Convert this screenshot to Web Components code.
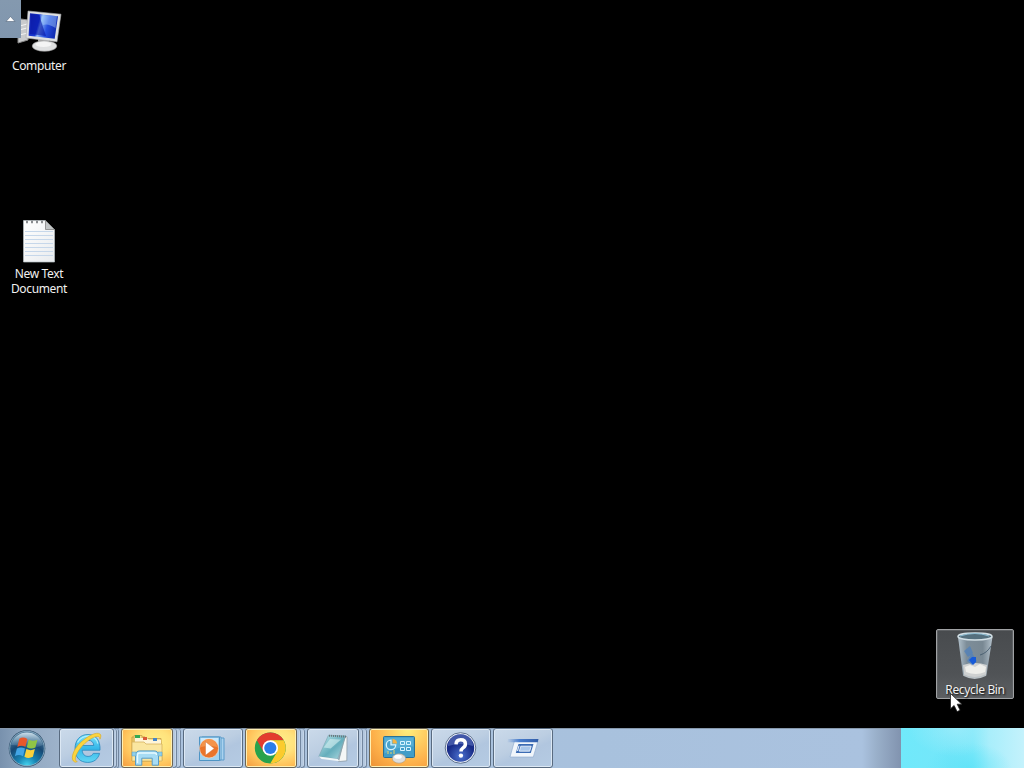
<!DOCTYPE html>
<html lang="en">
<head>
<meta charset="utf-8">
<title>Desktop</title>
<style>
html, body { margin: 0; height: 100%; background: #000; overflow: hidden; }
</style>
</head>
<body>
<win-desktop></win-desktop>
<script>
function define(name, html) {
  const t = document.createElement('template');
  t.innerHTML = html;
  customElements.define(name, class extends HTMLElement {
    constructor() {
      super();
      this.attachShadow({ mode: 'open' }).append(t.content.cloneNode(true));
    }
  });
}

define('desk-icon', `
<style>
:host { position: absolute; box-sizing: border-box; width: 78px; display: flex; flex-direction: column; align-items: center; border: 1px solid transparent; border-radius: 2px; color: #f0f0f0; font: 12px/15px "Noto Sans", "Open Sans", sans-serif; text-align: center; text-shadow: 1px 1px 2px #000; }
:host([selected]) { border-color: #a0a2a4; background: linear-gradient(#484b4e, #505356 65%, #5c5f62); box-shadow: inset 0 0 0 1px #5e6164; }
::slotted(svg) { display: block; flex: none; }
.label { letter-spacing: -.35px; }
</style>
<slot name="picture"></slot><div class="label"><slot></slot></div>`);

define('task-button', `
<style>
:host { display: block; box-sizing: border-box; flex: none; height: 40px; width: var(--w, 60px); border: 1px solid #596b80; border-radius: 3px; box-shadow: inset 0 0 0 1px #dce8f4; background: linear-gradient(155deg, #cbdaea 0%, #bccee2 45%, #b1c6df 60%, #b5cbe3 100%); }
:host([hot]) { border-color: #6b6455; box-shadow: inset 0 0 0 1px #fff0b3; background: radial-gradient(ellipse at 65% 35%, #fff08b 0%, #ffe27c 35%, #ffc45c 65%, #f39a3e 100%); }
:host([panel]) { background: radial-gradient(ellipse at 65% 0%, #fff07d 0%, #ffd165 30%, #fdb04a 65%, #ec9034 100%); }
::slotted(svg) { display: block; margin: -1px; }
</style><slot></slot>`);

define('stack-edge', `
<style>
:host { display: flex; flex: none; width: 8px; height: 40px; box-sizing: border-box; border-top: 1px solid #60738a; margin-right: 2px; }
i { display: block; box-sizing: border-box; width: 4px; height: 39px; border: 1px solid #72869f; border-left: 0; border-top: 0; border-radius: 0 3px 3px 0; background: linear-gradient(90deg, #b4c8df 60%, #cfdded); }
</style><i></i><i></i>`);

define('start-orb', `
<style>:host { display: block; flex: none; width: 59px; height: 40px; } svg { display: block; }</style>
<svg width="59" height="40" viewBox="0 728 59 40">
<defs>
<radialGradient id="o" cx=".5" cy="1" r=".95"><stop offset="0" stop-color="#48d8f2"/><stop offset=".3" stop-color="#1783b3"/><stop offset=".65" stop-color="#174873"/><stop offset="1" stop-color="#547c9c"/></radialGradient>
<linearGradient id="h" x2="0" y2="1"><stop offset="0" stop-color="#e1f0f7" stop-opacity=".85"/><stop offset="1" stop-color="#80adc8" stop-opacity=".15"/></linearGradient>
</defs>
<circle cx="27" cy="748.5" r="18.3" fill="#31506c"/><circle cx="27" cy="748.5" r="17.3" fill="url(#o)" stroke="#92b6cb" stroke-width=".8"/>
<path d="M11 745a16.5 16.5 0 0 1 32 0q-8 4-16 2-9-2-16-2z" fill="url(#h)"/>
<path d="M19.3 738.7q3.7-2.3 8.1.2l-2 7.9q-4-2-8.1.1z" fill="#e8582b"/>
<path d="M28.8 739.5q4.2 2.4 8.6.2l-2 7.7q-4.2 2.2-8.6-.1z" fill="#8fc545"/>
<path d="M16.9 748.4q4.2-2 8.1.1l-2 7.7q-4.2-2.3-8.1 0z" fill="#43a5e5"/>
<path d="M26.4 749.1q4.2 2.1 8.5 0l-2 7.7q-4.3 2.3-8.5-.1z" fill="#fbd13b"/>
</svg>`);

define('task-bar', `
<style>
:host { display: flex; width: 1024px; height: 40px; flex: none; background: linear-gradient(90deg, #7891ad 0, #91a8c1 25px, #9db2ca 58px, #abc2dd 62px, #a8c1dd 600px, #aac2df 862px, #99afc9 877px, #8193af 901px); box-shadow: inset 0 1px #8799ad; }
.gap1 { margin-right: 2px; }
.tray { margin-left: auto; width: 123px; height: 40px; background: radial-gradient(ellipse at 45% 0, #b1effb88, transparent 50%), radial-gradient(ellipse at 55% 100%, #52e1f799, transparent 45%), linear-gradient(90deg, #70e9fb 0, #75e6f9 50px, #7de8fa 72px, #a8eefb 88px, #c4f2fc 123px); }
</style>
<start-orb></start-orb>
<task-button style="--w:55px">
<svg width="55" height="40" viewBox="59 728 55 40">
<defs><linearGradient id="e" x2="0" y2="1"><stop stop-color="#7be3fa"/><stop offset=".5" stop-color="#35b7e9"/><stop offset="1" stop-color="#64d6f4"/></linearGradient></defs>
<path fill-rule="evenodd" d="M88 734.5c8 0 12.5 6 12 15.7H82.2c.3 4 2.4 6.2 5.9 6.2 2.6 0 4.2-1 5.1-3h6.4c-1.6 5.7-5.7 9-11.8 9-8 0-12.8-5.2-12.8-13.5 0-8.7 5-14.4 13-14.4zM82.3 745.5h11.5c-.3-3.4-2.3-5.2-5.6-5.2-3.2 0-5.2 1.8-5.9 5.2z" fill="url(#e)" stroke="#2787bd" stroke-width=".8"/>
<path d="M77.5 742.5c2.8-4.6 6.3-6.3 10.7-6.3 5 0 8.5 2.8 9.6 7.3" fill="none" stroke="#c2f5ff" stroke-width="1.3" opacity=".8"/>
<path d="M75.5 762.2c-6.1-1.2-2.8-12.4 4.6-19.2 7.1-6.8 16.4-11.8 20-8.9 1.2 1 .9 2.8-.2 5.1.2-2.8-2-3.6-6-1.9-5.8 2.4-13 9-16.5 15.4-2.3 4.2-3.1 8-.1 8.9z" fill="#fbd43e" stroke="#d7a623" stroke-width=".6"/>
</svg></task-button>
<stack-edge style="width:5px"></stack-edge>
<task-button hot style="--w:52px">
<svg width="52" height="40" viewBox="121 728 52 40">
<path d="M132 737h13l2 3h13v21h-28z" fill="#f4d472" stroke="#c99d40"/>
<path d="M134 735.5h8v3h19l1 22h-28z" fill="#f8df92" stroke="#d0aa53"/>
<path d="M135 738h12l2 2h12v4h-26z" fill="#fff5d7"/><path d="M135 735h5v3h-5z" fill="#36a853"/><path d="M143 737h4v3h-4z" fill="#d95938"/><path d="M153 738h4v3h-4z" fill="#4685c7"/>
<path d="M132 742h12l2 2h16v17h-30z" fill="#fae6a0" stroke="#d5b361" stroke-width=".8"/>
<path d="M135.5 765.2v-10q0-4.3 4.5-4.3h14q4.5 0 4.5 4.3v10h-6.3v-7h-10.4v7z" fill="#a7dcf4" stroke="#579cc6"/>
<path d="M137.5 763v-8q0-2 2-2h15q2 0 2 2" fill="none" stroke="#e7faff" stroke-width="1.4"/>
<path d="M132 752h4v4h-4zM158 752h4v4h-4z" fill="#8ed0eb" stroke="#589fc2" stroke-width=".5"/>
</svg></task-button>
<stack-edge></stack-edge>
<task-button class="gap1" style="--w:60px">
<svg width="60" height="40" viewBox="183 728 60 40">
<path d="M205 738h19v22h-19z" fill="#a9d2ef" stroke="#5b9bca"/><path d="M202 737h19v23h-19z" fill="#b9dcf3" stroke="#5b9bca"/><path d="M199.5 737h20v23.5h-20z" fill="#a3d3ef" stroke="#4f95c5"/>
<path d="M201 738h17v9q-9-1-17 6z" fill="#cae9fc"/><circle cx="209" cy="748.5" r="9.5" fill="#ea742a" stroke="#f6d6bd" stroke-width=".7"/><path d="M201 747a8 8 0 0 1 16 0q-8-2-16 0z" fill="#f3934a"/><path d="M205.5 741.8l8.8 6.7-8.8 6.7z" fill="#fff" stroke="#c5622b" stroke-width=".4"/>
</svg></task-button>
<task-button hot style="--w:52px">
<svg width="52" height="40" viewBox="245 728 52 40">
<circle cx="270.3" cy="748" r="15.5" fill="#2aa24c"/>
<path d="M256.9 740.25A15.5 15.5 0 0 1 283.7 740.25H270.3L263.6 751.9z" fill="#e33b2e"/>
<path d="M283.7 740.25A15.5 15.5 0 0 1 270.3 763.5L277 751.9 270.3 740.25z" fill="#fbcb2d"/>
<circle cx="270.3" cy="748" r="7.8" fill="#fff"/><circle cx="270.3" cy="748" r="6.1" fill="#2b7de9"/>
</svg></task-button>
<stack-edge></stack-edge>
<task-button style="--w:52px">
<svg width="52" height="40" viewBox="307 728 52 40">
<defs><linearGradient id="n" x2="1" y2="1"><stop stop-color="#bfe6ec"/><stop offset=".55" stop-color="#65aebc"/><stop offset="1" stop-color="#b4dce3"/></linearGradient></defs>
<path d="M345 736l2 .8-.2 24-8.2.8z" fill="#f4f6f6" stroke="#788890" stroke-width=".6"/><path d="M345 738l-7 23" stroke="#8da3a9" stroke-width=".8"/>
<path d="M328.4 735.3l17 .5-7.8 23.2-18.8-2.5z" fill="url(#n)" stroke="#7aa5b0" stroke-width=".6"/>
<path d="M318.8 756.5l18.8 2.5 2 2.2-18-2.2z" fill="#f2f7f8"/><path d="M329 735.7l17 1" stroke="#6c767c" stroke-width="2" stroke-dasharray="1 1"/><path d="M330 739l11 .4-10.4 9-7-1z" fill="#def6f6" opacity=".55"/>
</svg></task-button>
<stack-edge></stack-edge>
<task-button class="gap1" hot panel style="--w:60px">
<svg width="60" height="40" viewBox="369 728 60 40">
<rect x="383.5" y="736.5" width="31" height="21" rx="1" fill="#409dc8" stroke="#2c7195"/><path d="M384.5 737.5h29v9q-14-1-29 7z" fill="#65b9dc" opacity=".6"/>
<path d="M391 740.2a4.7 4.7 0 1 0 4.7 4.7H391z" fill="#4aa2cb" stroke="#d5f3ff" stroke-width="1.3"/><path d="M392.5 743.5v-4.7a4.7 4.7 0 0 1 4.6 4.7z" fill="#f6b343"/>
<path d="M400.5 741.5h4v3h-4zM406.5 741.5h4v3h-4zM400.5 747.5h4v3h-4zM406.5 747.5h4v3h-4z" fill="none" stroke="#d5f4ff"/>
<path d="M388 754v-3M391 754v-2M394 754v-4" stroke="#ebd264"/><ellipse cx="399" cy="758.5" rx="6.7" ry="4.7" fill="#dddedd" stroke="#a89983" stroke-width=".6"/><ellipse cx="398" cy="756.8" rx="3.8" ry="2" fill="#fff"/>
</svg></task-button>
<task-button class="gap1" style="--w:60px">
<svg width="60" height="40" viewBox="431 728 60 40">
<defs><radialGradient id="q" cy=".8"><stop stop-color="#4b71ce"/><stop offset="1" stop-color="#182b87"/></radialGradient></defs>
<circle cx="460.5" cy="748" r="15.3" fill="#eef3f9" stroke="#5e718f"/><circle cx="460.5" cy="748" r="13.7" fill="url(#q)"/><path d="M448 746a12.5 12 0 0 1 25 0q-12-4-25 0z" fill="#839bda" opacity=".4"/>
<path d="M456 744.3q.2-4.6 4.7-4.6 4.7 0 4.7 4.2 0 2.4-2.4 4-2 1.4-2 3.5" fill="none" stroke="#fff" stroke-width="3.5"/><circle cx="460.9" cy="755.6" r="2.2" fill="#fff"/>
</svg></task-button>
<task-button style="--w:60px">
<svg width="60" height="40" viewBox="493 728 60 40">
<defs><linearGradient id="r" x2="1"><stop stop-color="#477ccc" stop-opacity="0"/><stop offset=".4" stop-color="#477ccc"/><stop offset="1" stop-color="#315da8"/></linearGradient></defs>
<path d="M514.5 741h23.5l-4.7 16h-23.3z" fill="#f1f6fb" stroke="#8ca8cc" stroke-width=".6"/><path d="M508 739h30.5l-.8 3.2H507z" fill="url(#r)"/><path d="M518.5 744h15l-2.7 9h-15z" fill="#3c6cb4"/><path d="M520.8 746.2h10.4l-1.5 5h-10.4z" fill="#a8c6ea" stroke="#f4f9ff" stroke-width=".8"/><path d="M518.3 746l1.3-.5-1.5 5.5h-1.3z" fill="#dce9f8"/>
</svg></task-button>
<div class="tray"></div>`);

define('win-desktop', `
<style>
:host { display: flex; flex-direction: column; width: 1024px; height: 768px; background: #000; }
.canvas { position: relative; flex: 1; }
.tab { position: absolute; left: 0; top: 0; width: 21px; height: 38px; background: linear-gradient(#8499af, #8096ae); }
.tab svg, .pointer { display: block; }
.pointer { position: absolute; left: 949px; top: 692px; }
</style>
<div class="canvas">
<desk-icon style="left:0;top:5px">
<svg slot="picture" width="76" height="52" viewBox="1 6 76 52">
<defs><linearGradient id="s" x2="1" y2=".25"><stop stop-color="#1927ad"/><stop offset=".4" stop-color="#1739d5"/><stop offset=".48" stop-color="#8bb6f5"/><stop offset=".72" stop-color="#274fe0"/><stop offset="1" stop-color="#1430b5"/></linearGradient></defs>
<path d="M21 19l7 1v20l-10 3V25z" fill="#c9cbcd" stroke="#888"/><path d="M20 26l7-2M19 30l8-2M19 35l9-2" stroke="#f4f4f4"/>
<path d="M38 38l11 2-1 6-10-2z" fill="#aaa"/><ellipse cx="44.5" cy="46" rx="12.3" ry="5.3" fill="#dfe0e1" stroke="#999" stroke-width=".6"/><ellipse cx="43.5" cy="44.3" rx="8" ry="2.6" fill="#f4f4f4"/>
<path d="M28 11l33 3.2-4 27.6L26 38z" fill="#dfe1e2" stroke="#a7aaad" stroke-width=".6"/><path d="M30 13.3l28 2.9-3.3 22.5-26.1-3z" fill="url(#s)"/><path d="M31 14l8 1 7 21-16-2z" fill="#0714a2" opacity=".6"/><path d="M40 15l17 1-1.5 12Q48 23 43 25z" fill="#b1d9ff" opacity=".42"/>
</svg>Computer</desk-icon>
<desk-icon style="left:0;top:213px">
<svg slot="picture" width="76" height="52" viewBox="1 214 76 52">
<defs><linearGradient id="p" x2="1" y2="1"><stop stop-color="#fff"/><stop offset="1" stop-color="#e8ebee"/></linearGradient></defs>
<path d="M23.5 220.5h22l9 9v32.5h-31z" fill="url(#p)" stroke="#b6bec3" stroke-width=".7"/>
<path d="M25 231.5h28m-28 4h28m-28 4h28m-28 4h28m-28 4h28m-28 4h28m-28 4h28" stroke="#c6d7ea"/>
<path d="M45.5 220.5v9h9z" fill="#c2c5c7" stroke="#777" stroke-width=".7"/><path d="M26 222h19" stroke="#8a8d90" stroke-width="2.5" stroke-dasharray="2 3"/>
</svg>New Text<br>Document</desk-icon>
<desk-icon selected style="left:936px;top:629px;height:70px">
<svg slot="picture" width="76" height="52" viewBox="937 630 76 52">
<defs><linearGradient id="b" x2="1"><stop stop-color="#bfd0dc"/><stop offset=".25" stop-color="#8496a3"/><stop offset=".72" stop-color="#7f909c"/><stop offset="1" stop-color="#c3d2dd"/></linearGradient></defs>
<path d="M958 637l5 38q11 6 23.5 0l6-38z" fill="url(#b)" opacity=".88"/>
<path d="M963 665q12-4 24 0l-1 10q-11 5-22 0z" fill="#cfd1d1"/><path d="M965 667l5-2 5 2 5-3 6 3-1 5q-9 4-19 0z" fill="#eeeeea"/>
<path d="M964 651l6-5 3 7-5 4zM967 661l5-8 5 8-5 4z" fill="#4b7fbe" opacity=".7"/><path d="M969 660l3-3h4v5l-3 3z" fill="#175bd8"/>
<path d="M980 655q7-2 11-9" fill="none" stroke="#3f5668" stroke-width=".8"/>
<ellipse cx="975" cy="636.5" rx="17" ry="3.4" fill="#55707e" stroke="#d3e0e6" stroke-width="1.5"/><path d="M960 636q15-5 29 0" stroke="#8ebed4" fill="none"/>
<path d="M963.5 675q11 6 22.5 0" fill="none" stroke="#b9c0c4" stroke-width="1.8"/>
</svg>Recycle Bin</desk-icon>
<div class="tab"><svg width="21" height="38"><path d="M6 21.5l4.5-5 4.5 5z" fill="#fff" stroke="#52657a" stroke-width=".6"/></svg></div>
<svg class="pointer" width="16" height="22"><path d="M1.5 1.5v15.2l3.6-3.2 3 6.1 3-1.4-2.9-6h4.6z" fill="#fff" stroke="#222" stroke-width=".8"/></svg>
</div>
<task-bar></task-bar>`);
</script>
</body>
</html>
